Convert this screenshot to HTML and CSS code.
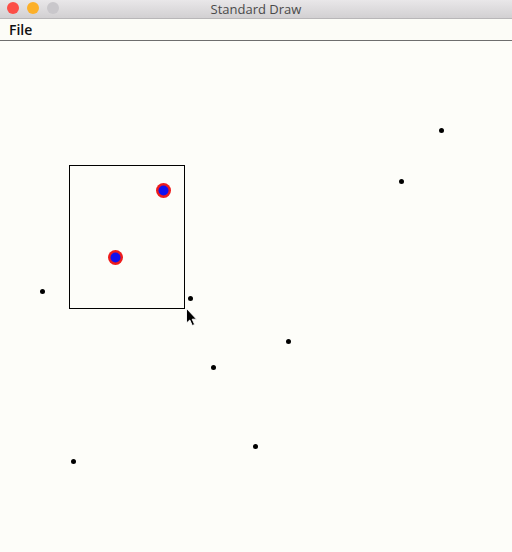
FILE: index.html
```html
<!DOCTYPE html>
<html>
<head>
<meta charset="utf-8">
<link rel="stylesheet" href="styles.css">
</head>
<body>
<div class="window">
  <div class="titlebar">
    <div class="lights">
      <span class="light red"></span>
      <span class="light yellow"></span>
      <span class="light grey"></span>
    </div>
    <div class="title">Standard Draw</div>
  </div>
  <div class="menubar"><span class="menu">File</span></div>
  <svg class="canvas" width="512" height="511" viewBox="0 41 512 511" xmlns="http://www.w3.org/2000/svg">
    <rect x="69.5" y="165.5" width="115" height="143" fill="none" stroke="#000" stroke-width="1"/>
    <circle cx="163.5" cy="190.5" r="7.5" fill="#ee1c1c"/>
    <circle cx="163.5" cy="190.5" r="5" fill="#1010f0"/>
    <circle cx="115.5" cy="257.5" r="7.5" fill="#ee1c1c"/>
    <circle cx="115.5" cy="257.5" r="5" fill="#1010f0"/>
    <g fill="#000">
      <circle cx="441.5" cy="130.5" r="2.5"/>
      <circle cx="401.5" cy="181.5" r="2.5"/>
      <circle cx="42.5" cy="291.5" r="2.5"/>
      <circle cx="190.5" cy="298.5" r="2.5"/>
      <circle cx="288.5" cy="341.5" r="2.5"/>
      <circle cx="213.5" cy="367.5" r="2.5"/>
      <circle cx="255.5" cy="446.5" r="2.5"/>
      <circle cx="73.5" cy="461.5" r="2.5"/>
    </g>
    <path d="M186.5 308.5 L186.5 323 L189.8 320 L192.3 325.5 L194.6 324.5 L192.2 319.2 L196.5 319.2 Z" fill="#000" stroke="#fff" stroke-width="0.9" stroke-linejoin="round"/>
  </svg>
</div>
</body>
</html>
```
FILE: styles.css
```css
html, body {
  margin: 0;
  padding: 0;
  background: #fdfdf9;
}
.window {
  width: 512px;
  height: 552px;
  display: flex;
  flex-direction: column;
  overflow: hidden;
  font-family: "Liberation Sans", Arial, sans-serif;
}
.titlebar {
  height: 18px;
  flex: none;
  position: relative;
  display: flex;
  align-items: center;
  justify-content: center;
  background: linear-gradient(#e9e7e9, #d2d0d2);
  border-bottom: 1px solid #b8b6b8;
}
.lights {
  position: absolute;
  left: 7px;
  top: 2px;
  display: flex;
  gap: 8px;
}
.light {
  width: 12px;
  height: 12px;
  border-radius: 50%;
  display: block;
}
.red { background: #fc4e47; }
.yellow { background: #fcb02a; }
.grey { background: #c9c7cb; }
.title {
  font-size: 13px;
  color: #4a4a4a;
  font-family: "Open Sans", "Liberation Sans", sans-serif;
}
.menubar {
  height: 21px;
  flex: none;
  display: flex;
  align-items: center;
  padding-left: 9px;
  background: #fcfcf7;
  border-bottom: 1px solid #6e6e6e;
}
.menu {
  font-size: 14px;
  font-weight: 600;
  color: #111;
  font-family: "Open Sans", "Liberation Sans", sans-serif;
}
.canvas {
  display: block;
  flex: none;
}
```
